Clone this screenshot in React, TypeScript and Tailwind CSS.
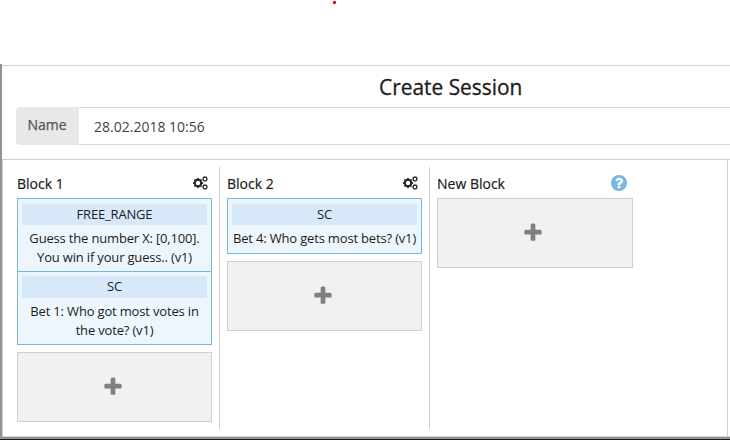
import type { ReactNode } from 'react';

const PLUS =
  'M1600 736v192q0 40-28 68t-68 28h-416v416q0 40-28 68t-68 28h-192q-40 0-68-28t-28-68v-416h-416q-40 0-68-28t-28-68v-192q0-40 28-68t68-28h416v-416q0-40 28-68t68-28h192q40 0 68 28t28 68v416h416q40 0 68 28t28 68z';
const HELP =
  'M1024 1376v-192q0-14-9-23t-23-9h-192q-14 0-23 9t-9 23v192q0 14 9 23t23 9h192q14 0 23-9t9-23zm256-672q0-88-55.500-163t-138.500-116-170-41q-243 0-371 213-15 24 8 42l132 100q7 6 19 6 16 0 25-12 53-68 86-92 34-24 86-24 48 0 85.500 26t37.500 59q0 38-20 61t-68 45q-63 28-115.500 86.500t-52.500 125.500v36q0 14 9 23t23 9h192q14 0 23-9t9-23q0-19 21.500-49.500t54.500-49.500q32-18 49-28.500t46-35 44.500-48 28-60.500 12.500-81zm384 192q0 209-103 385.500t-279.500 279.500-385.500 103-385.500-103-279.500-279.500-103-385.500 103-385.500 279.500-279.500 385.500-103 385.500 103 279.500 279.500 103 385.500z';

function Gear({ cx, cy, r, hole }: { cx: number; cy: number; r: number; hole: number }) {
  const body = r * 0.8;
  return (
    <g fill="none" stroke="#222">
      <circle cx={cx} cy={cy} r={(body + hole) / 2} strokeWidth={body - hole} />
      <circle cx={cx} cy={cy} r={r * 0.88} strokeWidth={r * 0.24} pathLength={16} strokeDasharray="1 1" strokeDashoffset={0.5} />
    </g>
  );
}

function Cogs() {
  return (
    <svg viewBox="0 0 15 14" className="mb-[3px] mr-1 h-3.5 w-[15px]">
      <Gear cx={5} cy={7} r={5.2} hole={2.2} />
      <Gear cx={12} cy={3} r={3} hole={1.25} />
      <Gear cx={12} cy={11} r={3} hole={1.25} />
    </svg>
  );
}

function AddBox({ className = '' }: { className?: string }) {
  return (
    <button className={`flex h-[70px] w-full items-center justify-center border border-[#d0d0d0] bg-[#f1f1f1] ${className}`}>
      <svg viewBox="0 0 1792 1792" className="mb-px mr-1 h-[22px] w-[22px] fill-[#808080]">
        <path d={PLUS} />
      </svg>
    </button>
  );
}

function Item({ type, lines, className }: { type: string; lines: string[]; className: string }) {
  return (
    <div className={`border border-[#78b6e4] bg-[#eef6fd] px-1 text-center text-[13px] leading-[19px] tracking-[-0.17px] text-[#1c1c1c] ${className}`}>
      <div className="mb-1 bg-[#d7e9f8] leading-[21px]">{type}</div>
      {lines.map((line) => (
        <div key={line} className="whitespace-nowrap">
          {line}
        </div>
      ))}
    </div>
  );
}

function Block({ title, icon, className, children }: { title: string; icon: ReactNode; className: string; children: ReactNode }) {
  return (
    <section className={`h-[262px] shrink-0 ${className}`}>
      <header className="flex h-[31px] items-center justify-between pt-[3px] text-sm text-[#1c1c1c]">
        <h2 className="[-webkit-text-stroke:0.2px_#1c1c1c]">{title}</h2>
        {icon}
      </header>
      {children}
    </section>
  );
}

export default function App() {
  return (
    <div className="flex h-[440px] w-[730px] flex-col overflow-hidden bg-white font-['Open_Sans','Noto_Sans',sans-serif]">
      <div className="h-16 shrink-0 pl-[333px] pt-[1px]">
        <div className="h-[3px] w-[3px] rounded-[1px] bg-[#f00010]" />
      </div>
      <main className="flex h-[375px] flex-col border-b-2 border-l-2 border-[#929292] pt-px">
        <div className="h-[94px] shrink-0 border-t border-[#d0d0d0]">
          <h1 className="h-[41px] pl-[377px] text-[20.9px] leading-[43px] text-[#1c1c1c] [-webkit-text-stroke:0.3px_#1c1c1c]">
            Create Session
          </h1>
          <div className="ml-3.5 flex h-[38px] text-sm">
            <label className="w-[63px] rounded-l bg-[#e8e8e8] pr-px text-center leading-[36px] text-[#555] [-webkit-text-stroke:0.25px_#555]">
              Name
            </label>
            <div className="flex-1 border-y border-[#dadada] pl-[15px] leading-[38px] text-[#444]">28.02.2018 10:56</div>
          </div>
        </div>
        <div className="flex h-[278px] w-[740px] shrink-0 border border-[#d0d0d0] pt-[7px]">
          <Block title="Block 1" className="w-[217px] border-r border-[#d0d0d0] pl-3.5 pr-[7px]" icon={<Cogs />}>
            <Item type="FREE_RANGE" lines={['Guess the number X: [0,100].', 'You win if your guess.. (v1)']} className="h-[74px] pt-[5px]" />
            <div className="-mt-px">
              <Item type="SC" lines={['Bet 1: Who got most votes in', 'the vote? (v1)']} className="h-[74px] pt-1 [&>div:first-child]:pb-px" />
            </div>
            <AddBox className="mt-[7px]" />
          </Block>
          <Block title="Block 2" className="w-[210px] border-r border-[#d0d0d0] px-[7px]" icon={<Cogs />}>
            <Item type="SC" lines={['Bet 4: Who gets most bets? (v1)']} className="h-14 pt-[5px]" />
            <AddBox className="mt-[7px]" />
          </Block>
          <Block
            title="New Block"
            className="w-[203px] pl-[7px]"
            icon={
              <svg viewBox="128 128 1536 1536" className="mb-[3px] mr-1.5 h-4 w-4 fill-[#78b6e4]">
                <path d={HELP} />
              </svg>
            }
          >
            <AddBox />
          </Block>
          <div className="-mt-[7px] ml-[94px] h-[276px] w-px bg-[#d0d0d0]" />
        </div>
      </main>
      <div className="h-px bg-[#181818]" />
    </div>
  );
}
